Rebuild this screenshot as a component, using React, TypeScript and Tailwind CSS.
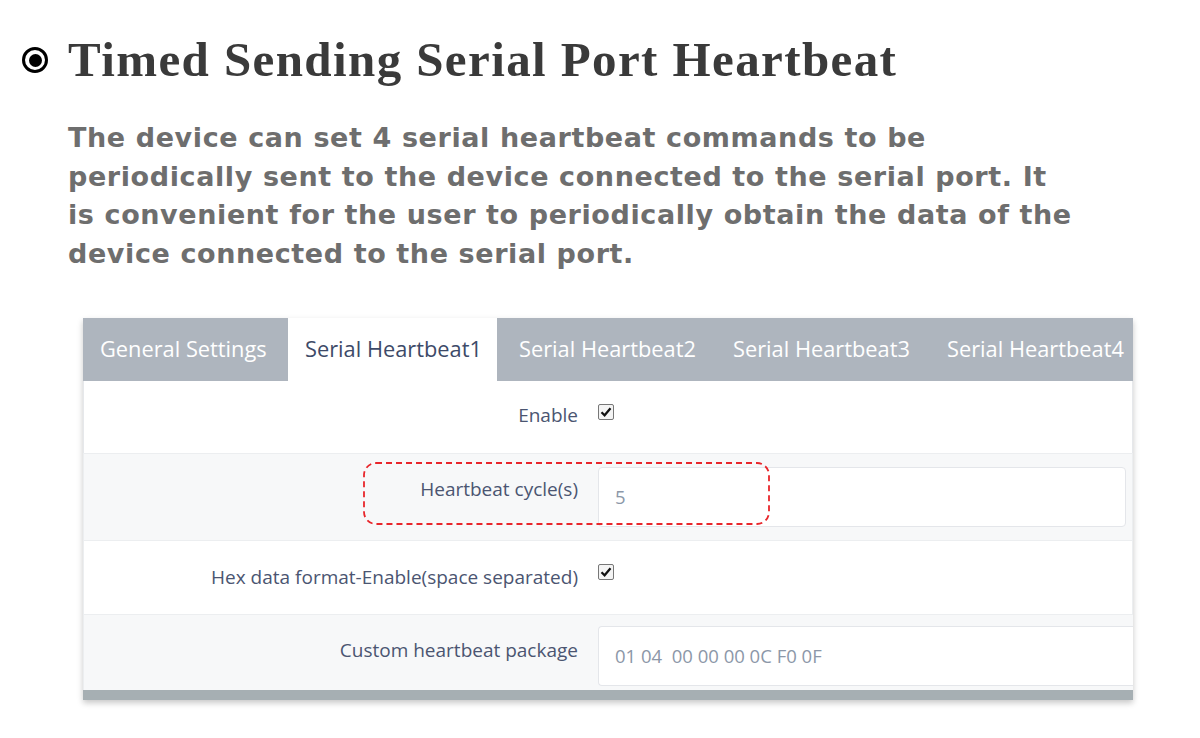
import React from "react";

const TABS = ["General Settings", "Serial Heartbeat1", "Serial Heartbeat2", "Serial Heartbeat3", "Serial Heartbeat4"];
const TAB_W = ["w-[205px]", "w-[209px]", "w-[214px]", "w-[214px]", "w-[208px]"];

function Check() {
  return (
    <span className="inline-flex h-[16px] w-[16px] items-center justify-center rounded-[2px] border border-[#777] bg-[#f4f4f4]">
      <svg width="12" height="12" viewBox="0 0 12 12">
        <path d="M1.5 6.2 L4.6 9.3 L10.5 2.2" fill="none" stroke="#111" strokeWidth="2.2" />
      </svg>
    </span>
  );
}

export default function App() {
  return (
    <div className="h-[738px] w-[1200px] bg-white overflow-hidden">
      {/* Title */}
      <div className="flex items-center pt-[33px] pl-[22px]">
        <span className="flex h-[26px] w-[26px] items-center justify-center rounded-full border-[3px] border-black">
          <span className="h-[13px] w-[13px] rounded-full bg-black" />
        </span>
        <h1 className="ml-[20px] whitespace-nowrap text-[49px] leading-[54px] font-bold tracking-[1.4px] text-[#3a3a3a] [font-family:'Liberation_Serif',serif]">
          Timed Sending Serial Port Heartbeat
        </h1>
      </div>

      {/* Description */}
      <div className="mt-[32px] ml-[68px] text-[27px] leading-[38.7px] font-bold tracking-[0.6px] text-[#6e6e6e] whitespace-nowrap [font-family:'DejaVu_Sans',sans-serif]">
        <p>The device can set 4 serial heartbeat commands to be</p>
        <p>periodically sent to the device connected to the serial port. It</p>
        <p>is convenient for the user to periodically obtain the data of the</p>
        <p>device connected to the serial port.</p>
      </div>

      {/* Panel */}
      <div className="mt-[44px] ml-[83px] w-[1050px] border-b-[10px] border-[#a6afb3] shadow-[0_3px_6px_rgba(0,0,0,0.22)] [font-family:'Open_Sans',sans-serif]">
        <div className="flex h-[63px] bg-[#aeb5be]">
          {TABS.map((t, i) => (
            <div
              key={t}
              className={
                (i === 1
                  ? "bg-white text-[#3d4a68] pl-[17px] "
                  : i === 0
                  ? "text-white pl-[17px] "
                  : "text-white pl-[22px] ") +
                TAB_W[i] +
                " flex h-full shrink-0 items-center whitespace-nowrap text-[21.8px]"
              }
            >
              {t}
            </div>
          ))}
        </div>

        <div className="flex h-[72px] bg-white border-l border-r border-[#e6e8eb]">
          <div className="w-[494px] pt-[20px] text-right text-[19px] text-[#4b5571]">Enable</div>
          <div className="pl-[20px] pt-[19px]"><Check /></div>
        </div>

        <div className="relative flex h-[87px] items-center bg-[#f7f8f9] border-l border-r border-t border-[#eceef0]">
          <div className="w-[494px] pb-[16px] text-right text-[19px] text-[#4b5571]">Heartbeat cycle(s)</div>
          <div className="ml-[20px] flex h-[60px] w-[528px] items-center rounded-[4px] border border-[#e4e6ea] bg-white pl-[16px] text-[18.5px] text-[#8c97a8]">
            5
          </div>
          <svg className="absolute left-[279px] top-[8px]" width="407" height="63" viewBox="0 0 407 63">
            <rect x="1" y="1" width="405" height="61" rx="12" fill="none" stroke="#e8262b" strokeWidth="1.8" strokeDasharray="6 4" />
          </svg>
        </div>

        <div className="flex h-[74px] bg-white border-l border-r border-t border-[#eceef0]">
          <div className="w-[494px] pt-[22px] text-right text-[19px] text-[#4b5571]">Hex data format-Enable(space separated)</div>
          <div className="pl-[20px] pt-[19px]"><Check /></div>
        </div>

        <div className="flex h-[76px] items-start bg-[#f7f8f9] border-l border-t border-[#eceef0]">
          <div className="w-[494px] pt-[21px] text-right text-[19px] text-[#4b5571]">Custom heartbeat package</div>
          <div className="ml-[20px] mt-[11px] flex h-[60px] flex-1 items-center rounded-l-[4px] border border-r-0 border-[#e4e6ea] bg-white pl-[16px] text-[18.5px] text-[#8c97a8] whitespace-pre">
            {"01 04  00 00 00 0C F0 0F"}
          </div>
        </div>
      </div>
    </div>
  );
}
